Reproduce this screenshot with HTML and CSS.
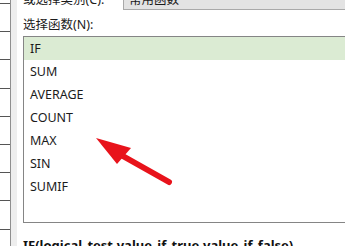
FILE: index.html
```html
<!DOCTYPE html>
<html lang="zh">
<head>
  <meta charset="UTF-8">
  <title>插入函数</title>
  <link rel="stylesheet" href="styles.css">
</head>
<body>
  <div class="page">
    <div class="sheet"></div>
    <div class="edge"></div>
    <div class="dialog">
      <div class="category-row">
        <span class="label category-label">或选择类别(C):</span>
        <div class="select">常用函数</div>
      </div>
      <div class="label pick-label">选择函数(N):</div>
      <div class="func-list">
        <div class="func-item selected">IF</div>
        <div class="func-item">SUM</div>
        <div class="func-item">AVERAGE</div>
        <div class="func-item">COUNT</div>
        <div class="func-item">MAX</div>
        <div class="func-item">SIN</div>
        <div class="func-item">SUMIF</div>
      </div>
      <div class="syntax">IF(logical_test,value_if_true,value_if_false)</div>
    </div>
  </div>

  <svg class="arrow" width="345" height="246" viewBox="0 0 345 246">
    <line x1="121" y1="155" x2="169" y2="182" stroke="#e8131b" stroke-width="6" stroke-linecap="round"/>
    <polygon points="96,138 131,148 117,164" fill="#e8131b"/>
  </svg>
</body>
</html>
```

FILE: styles.css
```css
body {
  margin: 0;
  padding: 0;
  overflow: hidden;
  width: 345px;
  height: 246px;
  position: relative;
  background: #fff;
  font-family: "Noto Sans", "Noto Sans CJK SC", sans-serif;
  font-size: 12.5px;
  color: #1b1b1b;
}

.page {
  display: flex;
  height: 246px;
  overflow: hidden;
}

.sheet {
  width: 10px;
  flex: none;
  border-right: 1px solid #8f8f8f;
  background-color: #fff;
  background-image: repeating-linear-gradient(to bottom, #555 0, #555 1px, transparent 1px, transparent 28.2px);
  background-position: 0 3px;
}

.edge {
  width: 6px;
  flex: none;
  background: #eeeeee;
}

.dialog {
  flex: 1;
  padding-left: 6px;
  margin-top: -11px;
  min-width: 0;
}

.category-row {
  display: flex;
  align-items: center;
  height: 21px;
}

.category-label {
  width: 100px;
  flex: none;
}

.select {
  flex: 1;
  height: 19px;
  line-height: 19px;
  background: #e3e3e3;
  border: 1px solid #a9a9a9;
  border-right: none;
  padding-left: 5px;
}

.label {
  line-height: 18px;
  white-space: nowrap;
}

.pick-label {
  margin-top: 6px;
}

.func-list {
  margin-top: 2px;
  height: 185px;
  border: 1px solid #858585;
  border-right: none;
}

.func-item {
  height: 23px;
  line-height: 23px;
  padding-left: 6px;
}

.func-item.selected {
  background: #dbebd3;
}

.syntax {
  margin-top: 13px;
  line-height: 18px;
  font-size: 13px;
  font-weight: bold;
  white-space: nowrap;
  color: #111;
}

.arrow {
  position: absolute;
  left: 0;
  top: 0;
}
```
